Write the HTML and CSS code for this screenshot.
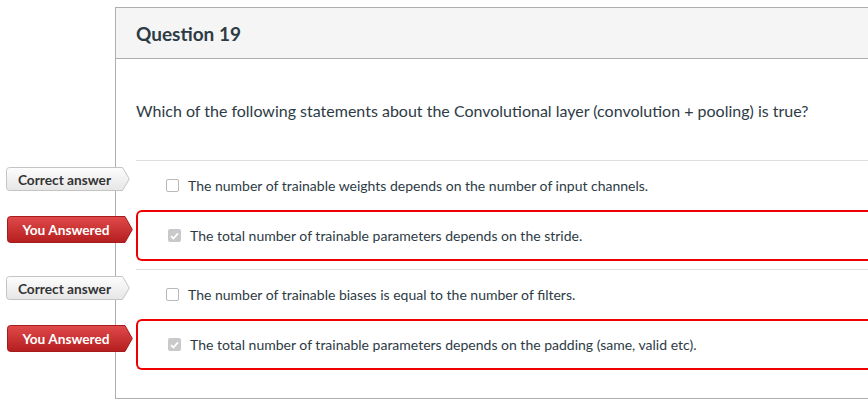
FILE: index.html
```html
<!DOCTYPE html>
<html lang="en">
<head>
<meta charset="utf-8">
<title>Question 19</title>
<link rel="stylesheet" href="styles.css">
</head>
<body>
<div class="page">
  <div class="card">
    <div class="card-header">
      <h2 class="q-title">Question 19</h2>
    </div>
    <div class="card-body">
      <p class="q-text">Which of the following statements about the Convolutional layer (convolution + pooling) is true?</p>
      <div class="answers">
        <div class="answer">
          <div class="tag tag-correct">
            <svg class="tag-bg" width="124" height="24" viewBox="0 0 124 24">
              <defs>
                <linearGradient id="gGray" x1="0" y1="0" x2="0" y2="1">
                  <stop offset="0" stop-color="#fdfdfd"/>
                  <stop offset="1" stop-color="#e6e6e6"/>
                </linearGradient>
              </defs>
              <path d="M3.5 0.5 H116.5 L123.3 12 L116.5 23.5 H3.5 Q0.5 23.5 0.5 20.5 V3.5 Q0.5 0.5 3.5 0.5 Z" fill="url(#gGray)" stroke="#c4c4c4"/>
            </svg>
            <span class="tag-text">Correct answer</span>
          </div>
          <span class="cb"></span>
          <span class="a-text">The number of trainable weights depends on the number of input channels.</span>
        </div>
        <div class="answer selected">
          <div class="tag tag-you">
            <svg class="tag-bg" width="126" height="27" viewBox="0 0 126 27">
              <defs>
                <linearGradient id="gRed" x1="0" y1="0" x2="0" y2="1">
                  <stop offset="0" stop-color="#e14a4a"/>
                  <stop offset="1" stop-color="#b41e1e"/>
                </linearGradient>
              </defs>
              <path d="M3.5 0.5 H118 L125.3 13.5 L118 26.5 H3.5 Q0.5 26.5 0.5 23.5 V3.5 Q0.5 0.5 3.5 0.5 Z" fill="url(#gRed)" stroke="#a51c1c"/>
            </svg>
            <span class="tag-text">You Answered</span>
          </div>
          <span class="cb checked"><svg width="9" height="8" viewBox="0 0 9 8"><path d="M1 4.2 L3.4 6.5 L8 1.3" fill="none" stroke="#fff" stroke-width="1.8"/></svg></span>
          <span class="a-text">The total number of trainable parameters depends on the stride.</span>
        </div>
        <div class="answer">
          <div class="tag tag-correct">
            <svg class="tag-bg" width="124" height="24" viewBox="0 0 124 24">
              <path d="M3.5 0.5 H116.5 L123.3 12 L116.5 23.5 H3.5 Q0.5 23.5 0.5 20.5 V3.5 Q0.5 0.5 3.5 0.5 Z" fill="url(#gGray)" stroke="#c4c4c4"/>
            </svg>
            <span class="tag-text">Correct answer</span>
          </div>
          <span class="cb"></span>
          <span class="a-text">The number of trainable biases is equal to the number of filters.</span>
        </div>
        <div class="answer selected">
          <div class="tag tag-you">
            <svg class="tag-bg" width="126" height="27" viewBox="0 0 126 27">
              <path d="M3.5 0.5 H118 L125.3 13.5 L118 26.5 H3.5 Q0.5 26.5 0.5 23.5 V3.5 Q0.5 0.5 3.5 0.5 Z" fill="url(#gRed)" stroke="#a51c1c"/>
            </svg>
            <span class="tag-text">You Answered</span>
          </div>
          <span class="cb checked"><svg width="9" height="8" viewBox="0 0 9 8"><path d="M1 4.2 L3.4 6.5 L8 1.3" fill="none" stroke="#fff" stroke-width="1.8"/></svg></span>
          <span class="a-text">The total number of trainable parameters depends on the padding (same, valid etc).</span>
        </div>
      </div>
    </div>
  </div>
</div>
</body>
</html>
```

FILE: styles.css
```css
html, body {
  margin: 0;
  padding: 0;
  background: #ffffff;
  overflow: hidden;
}

body {
  font-family: Lato, "Open Sans", "Liberation Sans", sans-serif;
  color: #2d3b45;
}

.page {
  padding: 7px 0 0 115px;
}

.card {
  border: 1px solid #aeaeae;
  border-right: none;
  background: #fff;
}

.card-header {
  height: 50px;
  background: #f5f5f5;
  border-bottom: 1px solid #aeaeae;
  display: flex;
  align-items: center;
  padding-left: 20px;
}

.q-title {
  margin: 0;
  font-size: 19px;
  font-weight: 700;
  color: #2d3b45;
}

.card-body {
  padding: 42px 0 20px 20px;
}

.q-text {
  margin: 0;
  font-size: 16px;
  line-height: 20px;
  color: #2d3b45;
}

.answers {
  margin-top: 39px;
}

.answer {
  position: relative;
  height: 49px;
  border-top: 1px solid #dddddd;
  display: flex;
  align-items: center;
  padding-left: 30px;
  font-size: 14px;
}

.answer.selected {
  height: 47px;
  border: 2px solid #ee0000;
  border-right: none;
  border-radius: 6px 0 0 6px;
  margin-bottom: 8px;
}

.cb {
  width: 11px;
  height: 11px;
  border: 1px solid #b9b9b9;
  border-radius: 2px;
  background: #fff;
  margin-right: 9px;
  display: flex;
  align-items: center;
  justify-content: center;
  flex: none;
}

.cb.checked {
  width: 13px;
  height: 13px;
  border: none;
  background: #c9c9cc;
}

.a-text {
  color: #2d3b45;
}

.tag {
  position: absolute;
  display: flex;
  align-items: center;
  font-size: 13.7px;
  font-weight: 700;
}

.tag-bg {
  position: absolute;
  left: 0;
  top: 0;
}

.tag-text {
  position: relative;
  width: 100%;
  text-align: center;
}

.tag-correct {
  left: -130px;
  top: 6px;
  width: 117px;
  height: 24px;
  color: #333333;
}

.tag-you {
  left: -131px;
  top: 4px;
  width: 118px;
  height: 27px;
  color: #ffffff;
}
```
